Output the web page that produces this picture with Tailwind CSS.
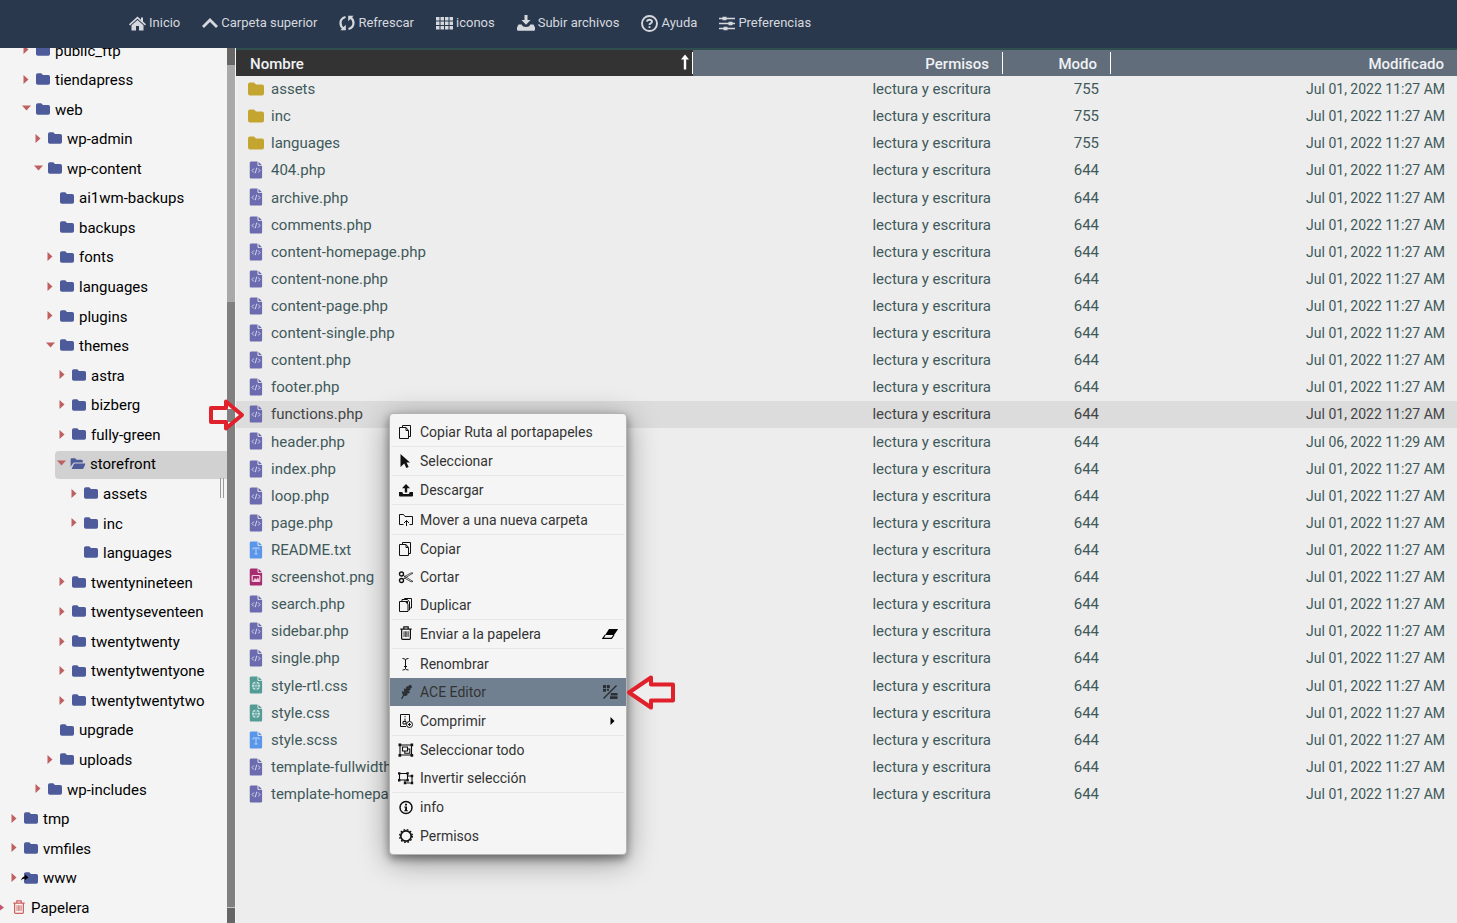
<!DOCTYPE html>
<html lang="es">
<head>
<meta charset="utf-8">
<title>Administrador de archivos</title>
<script src="https://cdn.jsdelivr.net/npm/@tailwindcss/browser@4"></script>
</head>
<body class="h-screen overflow-hidden flex flex-col bg-[#ededed] font-['Roboto',sans-serif] text-[15px]">

<svg class="hidden" aria-hidden="true">
  <symbol id="folder" viewBox="0 0 16 14"><path fill="currentColor" d="M2 0.500h4l2 2h6a2 2 0 0 1 2 2V11.500a2 2 0 0 1-2 2H2a2 2 0 0 1-2-2v-9a2 2 0 0 1 2-2z"/></symbol>
  <symbol id="open" viewBox="0 0 16 14"><path fill="currentColor" d="M0 10.500V2.500a1.500 1.500 0 0 1 1.500-1.500h3.500l1.500 1.500h5a1.500 1.500 0 0 1 1.500 1.500v1.500H4.500a2 2 0 0 0-1.800 1.100zM4.700 6.500H16l-2.300 4.800a1.500 1.500 0 0 1-1.400.9H1.300l2.500-5.100a1 1 0 0 1 .9-.6z"/></symbol>
  <symbol id="right" viewBox="0 0 9 9"><path fill="currentColor" d="M1.500 0L6.500 4.500L1.500 9z"/></symbol>
  <symbol id="down" viewBox="0 0 9 9"><path fill="currentColor" d="M0 1.500h9L4.500 6.500z"/></symbol>
  <symbol id="bin" viewBox="0 0 14 16"><g fill="none" stroke="currentColor" stroke-width="1.400"><path d="M.5 3.500h13M4.500 3V1h5v2M2 4v10.200q0 1 1 1h8q1 0 1-1V4"/><path stroke-width=".9" d="M4.700 6v6.500M6.300 6v6.500M7.900 6v6.500M9.500 6v6.500"/></g></symbol>
  <symbol id="page" viewBox="0 0 13 18"><path fill="currentColor" d="M1.500 0.500H8V3.500a1.500 1.500 0 0 0 1.500 1.500H12.700V16a1.500 1.500 0 0 1-1.500 1.500H1.500A1.500 1.500 0 0 1 0 16V2A1.500 1.500 0 0 1 1.500.5zM9 .8L12.500 4.200H9.700q-.7 0-.7-.7z"/></symbol>
  <symbol id="php" viewBox="0 0 13 18"><use href="#page"/><path fill="none" stroke="#d3d2ee" d="M4.300 7.500L2.500 9.500l1.800 2M8.700 7.500l1.800 2-1.800 2M7.200 6.700l-1.400 5.500"/></symbol>
  <symbol id="txt" viewBox="0 0 13 18"><use href="#page"/><path fill="none" stroke="#b9d3f8" d="M3.500 8.500V7h6v1.500M6.500 7v6M5 13h3"/></symbol>
  <symbol id="png" viewBox="0 0 13 18"><use href="#page"/><rect x="2.700" y="7.500" width="7.600" height="6" rx=".8" fill="none" stroke="#f3cfe2" stroke-width="1.200"/><path fill="#f3cfe2" d="M3.500 13l2-3 1.500 1.500 1.500-2 1.500 3.500z"/></symbol>
  <symbol id="css" viewBox="0 0 13 18"><use href="#page"/><circle cx="6.500" cy="9.700" r="4" fill="#d3ebe8"/><path fill="none" stroke="#569c96" stroke-width=".8" d="M2.500 8.300h8M2.500 11.200h8M6.500 5.700v8M6.500 6q-3.500 3.700 0 7.500q3.500-3.800 0-7.500"/></symbol>

  <symbol id="copy" viewBox="0 0 16 16"><g fill="none" stroke="currentColor"><path d="M1.500 3.500H8L10.500 6.500V14.500H1.500zM8 3.500v3h2.500"/><path d="M4.500 3V1.500H12.500V12.500H11"/></g></symbol>
  <symbol id="dup" viewBox="0 0 16 16"><g fill="none" stroke="currentColor"><path d="M1.500 4.500h6l2.500 3V14.500H1.500z"/><path d="M4 4.500V2.500H9.500L11.500 5v8H10.500M6.500 2.500V1.500H13.500V11H12"/></g><path fill="currentColor" d="M6 4h4v3.500L8.500 5.500z"/></symbol>
  <symbol id="cursor" viewBox="0 0 16 16"><path fill="currentColor" d="M2.500 1L12 9.500H8.500l2.200 4.600-2.300 1L6.200 10.600 2.500 14z"/></symbol>
  <symbol id="export" viewBox="0 0 16 16"><path fill="currentColor" d="M8 2l4 4.200H9.200V10.500H6.800V6.200H4zM1 10h3.200l1 2h5.600l1-2H15v3.500a1 1 0 0 1-1 1H2a1 1 0 0 1-1-1z"/></symbol>
  <symbol id="moveto" viewBox="0 0 16 16"><path fill="none" stroke="currentColor" d="M5.500 12.500H1.500V2.500h4l1.500 2h7.500v8h-3M8.500 14V8.500M6 11l2.500-2.500L11 11"/></symbol>
  <symbol id="cut" viewBox="0 0 16 16"><g fill="none" stroke="currentColor"><circle cx="3.500" cy="5" r="2" stroke-width="1.400"/><circle cx="3.500" cy="11.500" r="2" stroke-width="1.400"/><path stroke-width=".7" d="M5 6.200l10 6.300-2 .3L6 8.700M5 10.300l10-6.200-2-.2L6 7.800"/></g></symbol>
  <symbol id="rename" viewBox="0 0 16 16"><path fill="none" stroke="currentColor" d="M4.500 2.500q3 0 3 1.500v8.500q0 1.500-3 1.500M10.500 2.500q-3 0-3 1.500v8.500q0 1.500 3 1.500M6 10.500h3"/></symbol>
  <symbol id="quill" viewBox="0 0 16 16"><path fill="currentColor" d="M13 2q1-1.300 0-1.300Q10.500.8 9.800 3L9.300 1.800Q7.500 3 8 5.200L6.700 4Q5 6 6.500 8L4.300 7Q3.300 9 5 11L3 14.800h1.500L6 11.800Q8.700 12.500 10 10.500L8.300 9.700q3 .3 3.900-1.700L10.300 7q2.200-.3 2.700-2.300L11.500 4.500Q14.500 4 14 2.500z"/></symbol>
  <symbol id="zip" viewBox="0 0 16 16"><g fill="none" stroke="currentColor"><path d="M8 13.500H2.500V1.500h9V8M7 3v1.200M7 5.500v3M5 8.500h3v2.500h-3z"/><circle cx="11.500" cy="11.500" r="3"/><path d="M11.500 10v3M10 11.500h3"/></g></symbol>
  <symbol id="selall" viewBox="0 0 16 16"><g fill="none" stroke="currentColor" stroke-width="1.100"><path d="M2 3h11.500v10H2zM4.500 5h5v4h-5zM9.500 7h2.300v4.200h-5V9"/></g><path fill="currentColor" d="M0.500 1.500h2.700v2.700H.5zM12.500 1.500h2.700v2.700h-2.700zM.5 12h2.700v2.700H.5zM12.500 12h2.700v2.700h-2.700z"/></symbol>
  <symbol id="invert" viewBox="0 0 16 16"><path fill="none" stroke="currentColor" stroke-width="1.100" d="M1.500 3.500h8v6.500h-8zM9.500 6h4.500v7h-7v-3"/><path fill="currentColor" d="M0 2.200h2.400v2.400H0zM8.400 2.200h2.400v2.400H8.400zM0 9h2.400v2.400H0zM8.400 9h2.400v2.400H8.400zM12.800 4.800h2.400v2.400h-2.400zM12.800 11.800h2.400v2.400h-2.400zM5.800 11.800h2.400v2.400H5.800z"/></symbol>
  <symbol id="info" viewBox="0 0 16 16"><circle cx="8" cy="8.500" r="6" fill="none" stroke="currentColor" stroke-width="1.500"/><path fill="currentColor" d="M7 4.800h2v1.700H7zM6.300 7.500H9v3.700h.8v1H6.300v-1h.8V8.500h-.8z"/></symbol>
  <symbol id="gear" viewBox="0 0 16 16"><circle cx="8" cy="8" r="5.200" fill="none" stroke="currentColor" stroke-width="1.700"/><circle cx="8" cy="8" r="6.400" fill="none" stroke="currentColor" stroke-width="1.300" stroke-dasharray="1.700 1.650"/></symbol>
</svg>

<header class="h-12 shrink-0 bg-[#2a384e] text-[#d5d9de]">
  <nav class="flex h-[46px] items-center gap-[22px] pl-[129px] text-[13px]" aria-label="Herramientas">
    <button class="flex items-center gap-[3px]"><svg class="size-[17px]" viewBox="0 0 17 17"><path fill="currentColor" d="M8.500 1.500L12 4.700V2.500h2v4L17 9.300l-1 1.100L8.500 3.800 1 10.400 0 9.300zM8.500 5l6 5.200V15.500H10V11H7v4.500H2.500V10.200z"/></svg>Inicio</button>
    <button class="flex items-center gap-[3px]"><svg class="size-[16px]" viewBox="0 0 16 16"><path fill="none" stroke="currentColor" stroke-width="2.800" d="M1 12L8 5l7 7"/></svg>Carpeta superior</button>
    <button class="flex items-center gap-[3px]"><svg class="size-[16px]" viewBox="0 0 16 16"><g fill="none" stroke="currentColor" stroke-width="2.200"><path d="M6.500 2Q1.500 3.500 1.500 8q0 3.500 3 5.500M9.500 14Q14.500 12.500 14.500 8q0-3.500-3-5.500"/></g><path fill="currentColor" d="M6.800 9.800v5.400H1.400zM9.200 6.200V.8h5.400z"/></svg>Refrescar</button>
    <button class="flex items-center gap-[3px]"><svg class="size-[17px]" viewBox="0 0 17 17"><path fill="currentColor" d="M0 2h3.500v3.500H0zM4.500 2H8v3.500H4.500zM9 2h3.500v3.500H9zM13.500 2H17v3.500h-3.500zM0 6.500h3.500V10H0zM4.500 6.500H8V10H4.500zM9 6.500h3.500V10H9zM13.500 6.500H17V10h-3.500zM0 11h3.500v3.500H0zM4.500 11H8v3.500H4.500zM9 11h3.500v3.500H9zM13.500 11H17v3.500h-3.500z"/></svg>iconos</button>
    <button class="flex items-center gap-[3px]"><svg class="size-[18px]" viewBox="0 0 18 18"><path fill="currentColor" d="M7.500 1h3v5h3L9 10.800 4.500 6h3zM1.500 10.500h3.200Q5.500 13 9 13t4.300-2.500h3.200L18 13.500V15.500a1.200 1.200 0 0 1-1.200 1.200H1.200A1.200 1.200 0 0 1 0 15.500v-2z"/></svg>Subir archivos</button>
    <button class="flex items-center gap-[3px]"><svg class="size-[17px]" viewBox="0 0 17 17"><circle cx="8.500" cy="8.500" r="7.500" fill="none" stroke="currentColor" stroke-width="1.900"/><path fill="none" stroke="currentColor" stroke-width="1.900" d="M6 6.700Q6.200 4.800 8.500 4.800T11 6.600Q11 7.700 9.700 8.300T8.500 10M8.500 11.200v1.900"/></svg>Ayuda</button>
    <button class="flex items-center gap-[3px]"><svg class="size-[16px]" viewBox="0 0 16 16"><path stroke="currentColor" stroke-width="1.400" d="M0 3.500h16M0 8.500h16M0 13.500h16"/><path fill="currentColor" d="M3.500 1.700H7.500v3.600H3.500zM9.500 6.700h4v3.600h-4zM4.500 11.700h4v3.600h-4z"/></svg>Preferencias</button>
  </nav>
</header>

<div class="flex min-h-0 flex-1">
  <aside class="relative w-[227px] shrink-0 overflow-hidden bg-[#f4f4f4] text-black">
    <ul class="-mt-[12px] flex h-[calc(100%+12px)] flex-col whitespace-nowrap [&>li]:flex [&>li]:min-h-7 [&>li]:flex-1 [&>li]:items-center [&_a]:flex [&_a]:h-7 [&_a]:items-center [&_a]:gap-[5px] [&_svg]:-mt-[2px] [&_svg]:h-[14px] [&_svg]:w-[14px] [&_svg]:shrink-0 [&_svg]:text-[#4d5b9a] [&_svg:first-child]:h-[9px] [&_svg:first-child]:w-[9px] [&_svg:first-child]:text-[#bf5f5f]">
      <li class="pl-[22px]"><a href="#"><svg><use href="#right"/></svg><svg><use href="#folder"/></svg>public_ftp</a></li>
      <li class="pl-[22px]"><a href="#"><svg><use href="#right"/></svg><svg><use href="#folder"/></svg>tiendapress</a></li>
      <li class="pl-[22px]"><a href="#"><svg><use href="#down"/></svg><svg><use href="#folder"/></svg>web</a></li>
      <li class="pl-[34px]"><a href="#"><svg><use href="#right"/></svg><svg><use href="#folder"/></svg>wp-admin</a></li>
      <li class="pl-[34px]"><a href="#"><svg><use href="#down"/></svg><svg><use href="#folder"/></svg>wp-content</a></li>
      <li class="pl-[46px]"><a href="#"><svg></svg><svg><use href="#folder"/></svg>ai1wm-backups</a></li>
      <li class="pl-[46px]"><a href="#"><svg></svg><svg><use href="#folder"/></svg>backups</a></li>
      <li class="pl-[46px]"><a href="#"><svg><use href="#right"/></svg><svg><use href="#folder"/></svg>fonts</a></li>
      <li class="pl-[46px]"><a href="#"><svg><use href="#right"/></svg><svg><use href="#folder"/></svg>languages</a></li>
      <li class="pl-[46px]"><a href="#"><svg><use href="#right"/></svg><svg><use href="#folder"/></svg>plugins</a></li>
      <li class="pl-[46px]"><a href="#"><svg><use href="#down"/></svg><svg><use href="#folder"/></svg>themes</a></li>
      <li class="pl-[58px]"><a href="#"><svg><use href="#right"/></svg><svg><use href="#folder"/></svg>astra</a></li>
      <li class="pl-[58px]"><a href="#"><svg><use href="#right"/></svg><svg><use href="#folder"/></svg>bizberg</a></li>
      <li class="pl-[58px]"><a href="#"><svg><use href="#right"/></svg><svg><use href="#folder"/></svg>fully-green</a></li>
      <li class="pl-[55px]"><a href="#" class="w-full rounded-l-sm bg-[#d1d1d1] pl-[2px]" aria-current="true"><svg><use href="#down"/></svg><svg class="scale-110"><use href="#open"/></svg>storefront</a></li>
      <li class="pl-[70px]"><a href="#"><svg><use href="#right"/></svg><svg><use href="#folder"/></svg>assets</a></li>
      <li class="pl-[70px]"><a href="#"><svg><use href="#right"/></svg><svg><use href="#folder"/></svg>inc</a></li>
      <li class="pl-[70px]"><a href="#"><svg></svg><svg><use href="#folder"/></svg>languages</a></li>
      <li class="pl-[58px]"><a href="#"><svg><use href="#right"/></svg><svg><use href="#folder"/></svg>twentynineteen</a></li>
      <li class="pl-[58px]"><a href="#"><svg><use href="#right"/></svg><svg><use href="#folder"/></svg>twentyseventeen</a></li>
      <li class="pl-[58px]"><a href="#"><svg><use href="#right"/></svg><svg><use href="#folder"/></svg>twentytwenty</a></li>
      <li class="pl-[58px]"><a href="#"><svg><use href="#right"/></svg><svg><use href="#folder"/></svg>twentytwentyone</a></li>
      <li class="pl-[58px]"><a href="#"><svg><use href="#right"/></svg><svg><use href="#folder"/></svg>twentytwentytwo</a></li>
      <li class="pl-[46px]"><a href="#"><svg></svg><svg><use href="#folder"/></svg>upgrade</a></li>
      <li class="pl-[46px]"><a href="#"><svg><use href="#right"/></svg><svg><use href="#folder"/></svg>uploads</a></li>
      <li class="pl-[34px]"><a href="#"><svg><use href="#right"/></svg><svg><use href="#folder"/></svg>wp-includes</a></li>
      <li class="pl-[10px]"><a href="#"><svg><use href="#right"/></svg><svg><use href="#folder"/></svg>tmp</a></li>
      <li class="pl-[10px]"><a href="#"><svg><use href="#right"/></svg><svg><use href="#folder"/></svg>vmfiles</a></li>
      <li class="pl-[10px]"><a href="#"><svg><use href="#right"/></svg><svg class="overflow-visible" viewBox="0 0 14 14"><use href="#folder" width="14" height="14"/><path fill="#000" d="M-3 9.500Q-2 5.500 1 5.500V3.500L4.500 6.500 1 9V7.500Q-1.500 7.500-3 9.500z"/></svg>www</a></li>
      <li><a href="#" class="-ml-[2px]"><svg class="overflow-visible" viewBox="0 0 9 9"><path fill="#c4556e" d="M0 0L6 4.500L0 9z"/></svg><svg class="text-[#cc6260]!"><use href="#bin"/></svg>Papelera</a></li>
    </ul>
    <div class="absolute right-[3px] top-[430px] h-5 w-1 border-x border-[#9a9a9a]"></div>
  </aside>
  <div class="flex w-[8px] shrink-0 flex-col bg-[#808080]" aria-hidden="true">
    <div class="h-[17px] bg-[#666]"></div>
    <div class="h-[237px] bg-[#a9a9a9]"></div>
    <div class="mt-auto h-[16px] border-t border-[#c4c4c4] bg-[#666]"></div>
  </div>

  <main class="min-w-0 flex-1 border-l border-[#f4f4f4]">
    <table class="w-full table-fixed border-separate border-spacing-0 text-right whitespace-nowrap text-[#40595a] [&_tbody_tr]:h-[27px] [&_tbody_tr:nth-child(9n+5)]:h-7 [&_td]:p-0 [&_td:first-child]:pl-[12px] [&_td:nth-child(2)]:pr-[12px] [&_td:nth-child(3)]:pr-[12px] [&_td:nth-child(4)]:pr-[12px] [&_td:nth-child(4)]:text-[14px] [&_a]:flex [&_a]:items-center [&_a]:gap-[7px] [&_svg]:-mt-[2px] [&_svg]:h-[18px] [&_svg]:w-4">
      <colgroup><col><col class="w-[310px]"><col class="w-[108px]"><col class="w-[346px]"></colgroup>
      <thead class="text-[#f0f2f4]">
        <tr class="h-7 bg-[#616d7a] [&_th]:border-t-2 [&_th]:border-[#2f4f4f] [&_th]:p-0 [&_th]:font-medium [&_div]:h-[22px] [&_div]:leading-6">
          <th class="bg-[#333]"><div class="flex justify-between border-r border-white pl-[14px]">Nombre<svg class="mt-[2px]! mr-[3px] h-4! w-2!" viewBox="0 0 8 16"><path fill="#fff" d="M4 0.500L8 5.500H5.200V15.500H2.800V5.500H0z"/></svg></div></th>
          <th><div class="border-r border-white pr-[13px]">Permisos</div></th>
          <th><div class="border-r border-white pr-[13px]">Modo</div></th>
          <th><div class="pr-[13px]">Modificado</div></th>
        </tr>
      </thead>
      <tbody>
        <tr><td><a href="#"><svg class="text-[#c4a52f]"><use href="#folder"/></svg>assets</a></td><td>lectura y escritura</td><td>755</td><td>Jul 01, 2022 11:27 AM</td></tr>
        <tr><td><a href="#"><svg class="text-[#c4a52f]"><use href="#folder"/></svg>inc</a></td><td>lectura y escritura</td><td>755</td><td>Jul 01, 2022 11:27 AM</td></tr>
        <tr><td><a href="#"><svg class="text-[#c4a52f]"><use href="#folder"/></svg>languages</a></td><td>lectura y escritura</td><td>755</td><td>Jul 01, 2022 11:27 AM</td></tr>
        <tr><td><a href="#"><svg class="text-[#6c6bb0]"><use href="#php"/></svg>404.php</a></td><td>lectura y escritura</td><td>644</td><td>Jul 01, 2022 11:27 AM</td></tr>
        <tr><td><a href="#"><svg class="text-[#6c6bb0]"><use href="#php"/></svg>archive.php</a></td><td>lectura y escritura</td><td>644</td><td>Jul 01, 2022 11:27 AM</td></tr>
        <tr><td><a href="#"><svg class="text-[#6c6bb0]"><use href="#php"/></svg>comments.php</a></td><td>lectura y escritura</td><td>644</td><td>Jul 01, 2022 11:27 AM</td></tr>
        <tr><td><a href="#"><svg class="text-[#6c6bb0]"><use href="#php"/></svg>content-homepage.php</a></td><td>lectura y escritura</td><td>644</td><td>Jul 01, 2022 11:27 AM</td></tr>
        <tr><td><a href="#"><svg class="text-[#6c6bb0]"><use href="#php"/></svg>content-none.php</a></td><td>lectura y escritura</td><td>644</td><td>Jul 01, 2022 11:27 AM</td></tr>
        <tr><td><a href="#"><svg class="text-[#6c6bb0]"><use href="#php"/></svg>content-page.php</a></td><td>lectura y escritura</td><td>644</td><td>Jul 01, 2022 11:27 AM</td></tr>
        <tr><td><a href="#"><svg class="text-[#6c6bb0]"><use href="#php"/></svg>content-single.php</a></td><td>lectura y escritura</td><td>644</td><td>Jul 01, 2022 11:27 AM</td></tr>
        <tr><td><a href="#"><svg class="text-[#6c6bb0]"><use href="#php"/></svg>content.php</a></td><td>lectura y escritura</td><td>644</td><td>Jul 01, 2022 11:27 AM</td></tr>
        <tr><td><a href="#"><svg class="text-[#6c6bb0]"><use href="#php"/></svg>footer.php</a></td><td>lectura y escritura</td><td>644</td><td>Jul 01, 2022 11:27 AM</td></tr>
        <tr class="bg-[#dcdcdc] text-[#444]"><td><a href="#"><svg class="text-[#6c6bb0]"><use href="#php"/></svg>functions.php</a></td><td>lectura y escritura</td><td>644</td><td>Jul 01, 2022 11:27 AM</td></tr>
        <tr><td><a href="#"><svg class="text-[#6c6bb0]"><use href="#php"/></svg>header.php</a></td><td>lectura y escritura</td><td>644</td><td>Jul 06, 2022 11:29 AM</td></tr>
        <tr><td><a href="#"><svg class="text-[#6c6bb0]"><use href="#php"/></svg>index.php</a></td><td>lectura y escritura</td><td>644</td><td>Jul 01, 2022 11:27 AM</td></tr>
        <tr><td><a href="#"><svg class="text-[#6c6bb0]"><use href="#php"/></svg>loop.php</a></td><td>lectura y escritura</td><td>644</td><td>Jul 01, 2022 11:27 AM</td></tr>
        <tr><td><a href="#"><svg class="text-[#6c6bb0]"><use href="#php"/></svg>page.php</a></td><td>lectura y escritura</td><td>644</td><td>Jul 01, 2022 11:27 AM</td></tr>
        <tr><td><a href="#"><svg class="text-[#5a96ea]"><use href="#txt"/></svg>README.txt</a></td><td>lectura y escritura</td><td>644</td><td>Jul 01, 2022 11:27 AM</td></tr>
        <tr><td><a href="#"><svg class="text-[#a62d70]"><use href="#png"/></svg>screenshot.png</a></td><td>lectura y escritura</td><td>644</td><td>Jul 01, 2022 11:27 AM</td></tr>
        <tr><td><a href="#"><svg class="text-[#6c6bb0]"><use href="#php"/></svg>search.php</a></td><td>lectura y escritura</td><td>644</td><td>Jul 01, 2022 11:27 AM</td></tr>
        <tr><td><a href="#"><svg class="text-[#6c6bb0]"><use href="#php"/></svg>sidebar.php</a></td><td>lectura y escritura</td><td>644</td><td>Jul 01, 2022 11:27 AM</td></tr>
        <tr><td><a href="#"><svg class="text-[#6c6bb0]"><use href="#php"/></svg>single.php</a></td><td>lectura y escritura</td><td>644</td><td>Jul 01, 2022 11:27 AM</td></tr>
        <tr><td><a href="#"><svg class="text-[#569c96]"><use href="#css"/></svg>style-rtl.css</a></td><td>lectura y escritura</td><td>644</td><td>Jul 01, 2022 11:27 AM</td></tr>
        <tr><td><a href="#"><svg class="text-[#569c96]"><use href="#css"/></svg>style.css</a></td><td>lectura y escritura</td><td>644</td><td>Jul 01, 2022 11:27 AM</td></tr>
        <tr><td><a href="#"><svg class="text-[#5a96ea]"><use href="#txt"/></svg>style.scss</a></td><td>lectura y escritura</td><td>644</td><td>Jul 01, 2022 11:27 AM</td></tr>
        <tr><td><a href="#"><svg class="text-[#6c6bb0]"><use href="#php"/></svg>template-fullwidth.php</a></td><td>lectura y escritura</td><td>644</td><td>Jul 01, 2022 11:27 AM</td></tr>
        <tr><td><a href="#"><svg class="text-[#6c6bb0]"><use href="#php"/></svg>template-homepage.php</a></td><td>lectura y escritura</td><td>644</td><td>Jul 01, 2022 11:27 AM</td></tr>
      </tbody>
    </table>
  </main>
</div>

<div role="menu" class="absolute left-[389px] top-[413px] w-[238px] rounded-[4px] border border-[#b4b4b4] bg-[#f5f5f5] py-1 text-[14px] text-[#333] shadow-[0_6px_30px_rgba(0,0,0,0.4),0_4px_8px_rgba(0,0,0,0.4)] [&_button]:flex [&_button]:h-7 [&_button]:w-full [&_button]:items-center [&_button]:gap-[6px] [&_button]:pl-2 [&_button]:pr-2 [&_button]:text-left [&_svg]:size-4 [&_svg]:text-[#111] [&_hr]:mx-[2px] [&_hr]:border-[#e6e6e6]">
  <button role="menuitem"><svg><use href="#copy"/></svg>Copiar Ruta al portapapeles</button><hr>
  <button role="menuitem"><svg><use href="#cursor"/></svg>Seleccionar</button><hr>
  <button role="menuitem"><svg><use href="#export"/></svg>Descargar</button><hr class="mb-px">
  <button role="menuitem"><svg><use href="#moveto"/></svg>Mover a una nueva carpeta</button><hr>
  <button role="menuitem"><svg><use href="#copy"/></svg>Copiar</button>
  <button role="menuitem"><svg><use href="#cut"/></svg>Cortar</button>
  <button role="menuitem"><svg><use href="#dup"/></svg>Duplicar</button><hr>
  <button role="menuitem"><svg><use href="#bin" height="14"/></svg>Enviar a la papelera<svg class="ml-auto" viewBox="0 0 16 16"><path fill="#000" d="M7 3h8.500q.6 0 .2.800L12 9H3.200z"/><path fill="none" stroke="#000" stroke-width="1.200" d="M3.200 9L.8 12.400h8.700L12 9"/></svg></button><hr class="mb-px">
  <button role="menuitem"><svg><use href="#rename"/></svg>Renombrar</button>
  <button role="menuitem" class="bg-[#708090]"><svg class="text-[#2b2f33]!"><use href="#quill"/></svg>ACE Editor<svg class="ml-auto text-[#2b2f33]!" viewBox="0 0 16 16"><path stroke="currentColor" stroke-width="1.400" d="M1.500 14.500L14.500 1.500"/><path fill="currentColor" d="M1 1h3v3H1zM4.800 1h3v3h-3zM1 4.800h3v3H1zM4.800 4.800H7v2H4.800zM9 9h6.500v2.500H8.500zM8 12.300h7.500V15H8z"/></svg></button>
  <button role="menuitem" class="mt-px"><svg><use href="#zip"/></svg>Comprimir<svg class="ml-auto" viewBox="0 0 16 16"><path fill="#000" d="M8.500 4v8l4-4z"/></svg></button><hr>
  <button role="menuitem"><svg><use href="#selall"/></svg>Seleccionar todo</button>
  <button role="menuitem"><svg><use href="#invert"/></svg>Invertir selección</button><hr>
  <button role="menuitem"><svg><use href="#info"/></svg>info</button>
  <button role="menuitem" class="mt-px"><svg><use href="#gear"/></svg>Permisos</button>
</div>

<svg class="absolute left-[207px] top-[397px] h-9 w-[38px]" viewBox="0 0 38 36"><path fill="#f4f4f4" d="M4 11h14V5l3-1L35 18 21 32l-3-1V25H4z"/><path fill="#808080" d="M20 6h8v5l-8-4zM20 12h8v13h-8zM20 30l8-5v5z"/><path fill="none" stroke="#e0202a" stroke-width="4" stroke-linejoin="round" d="M4 11h15V4.500L35 18 19 31.500V25H4z"/></svg>
<svg class="absolute left-[625px] top-[673px] h-[38px] w-[52px]" viewBox="0 0 52 38"><path fill="#eee" stroke="#e0202a" stroke-width="4" stroke-linejoin="round" d="M48 11.500H26V4.500L4 19.500 26 34.500V27.500H48z"/></svg>
</body>
</html>
